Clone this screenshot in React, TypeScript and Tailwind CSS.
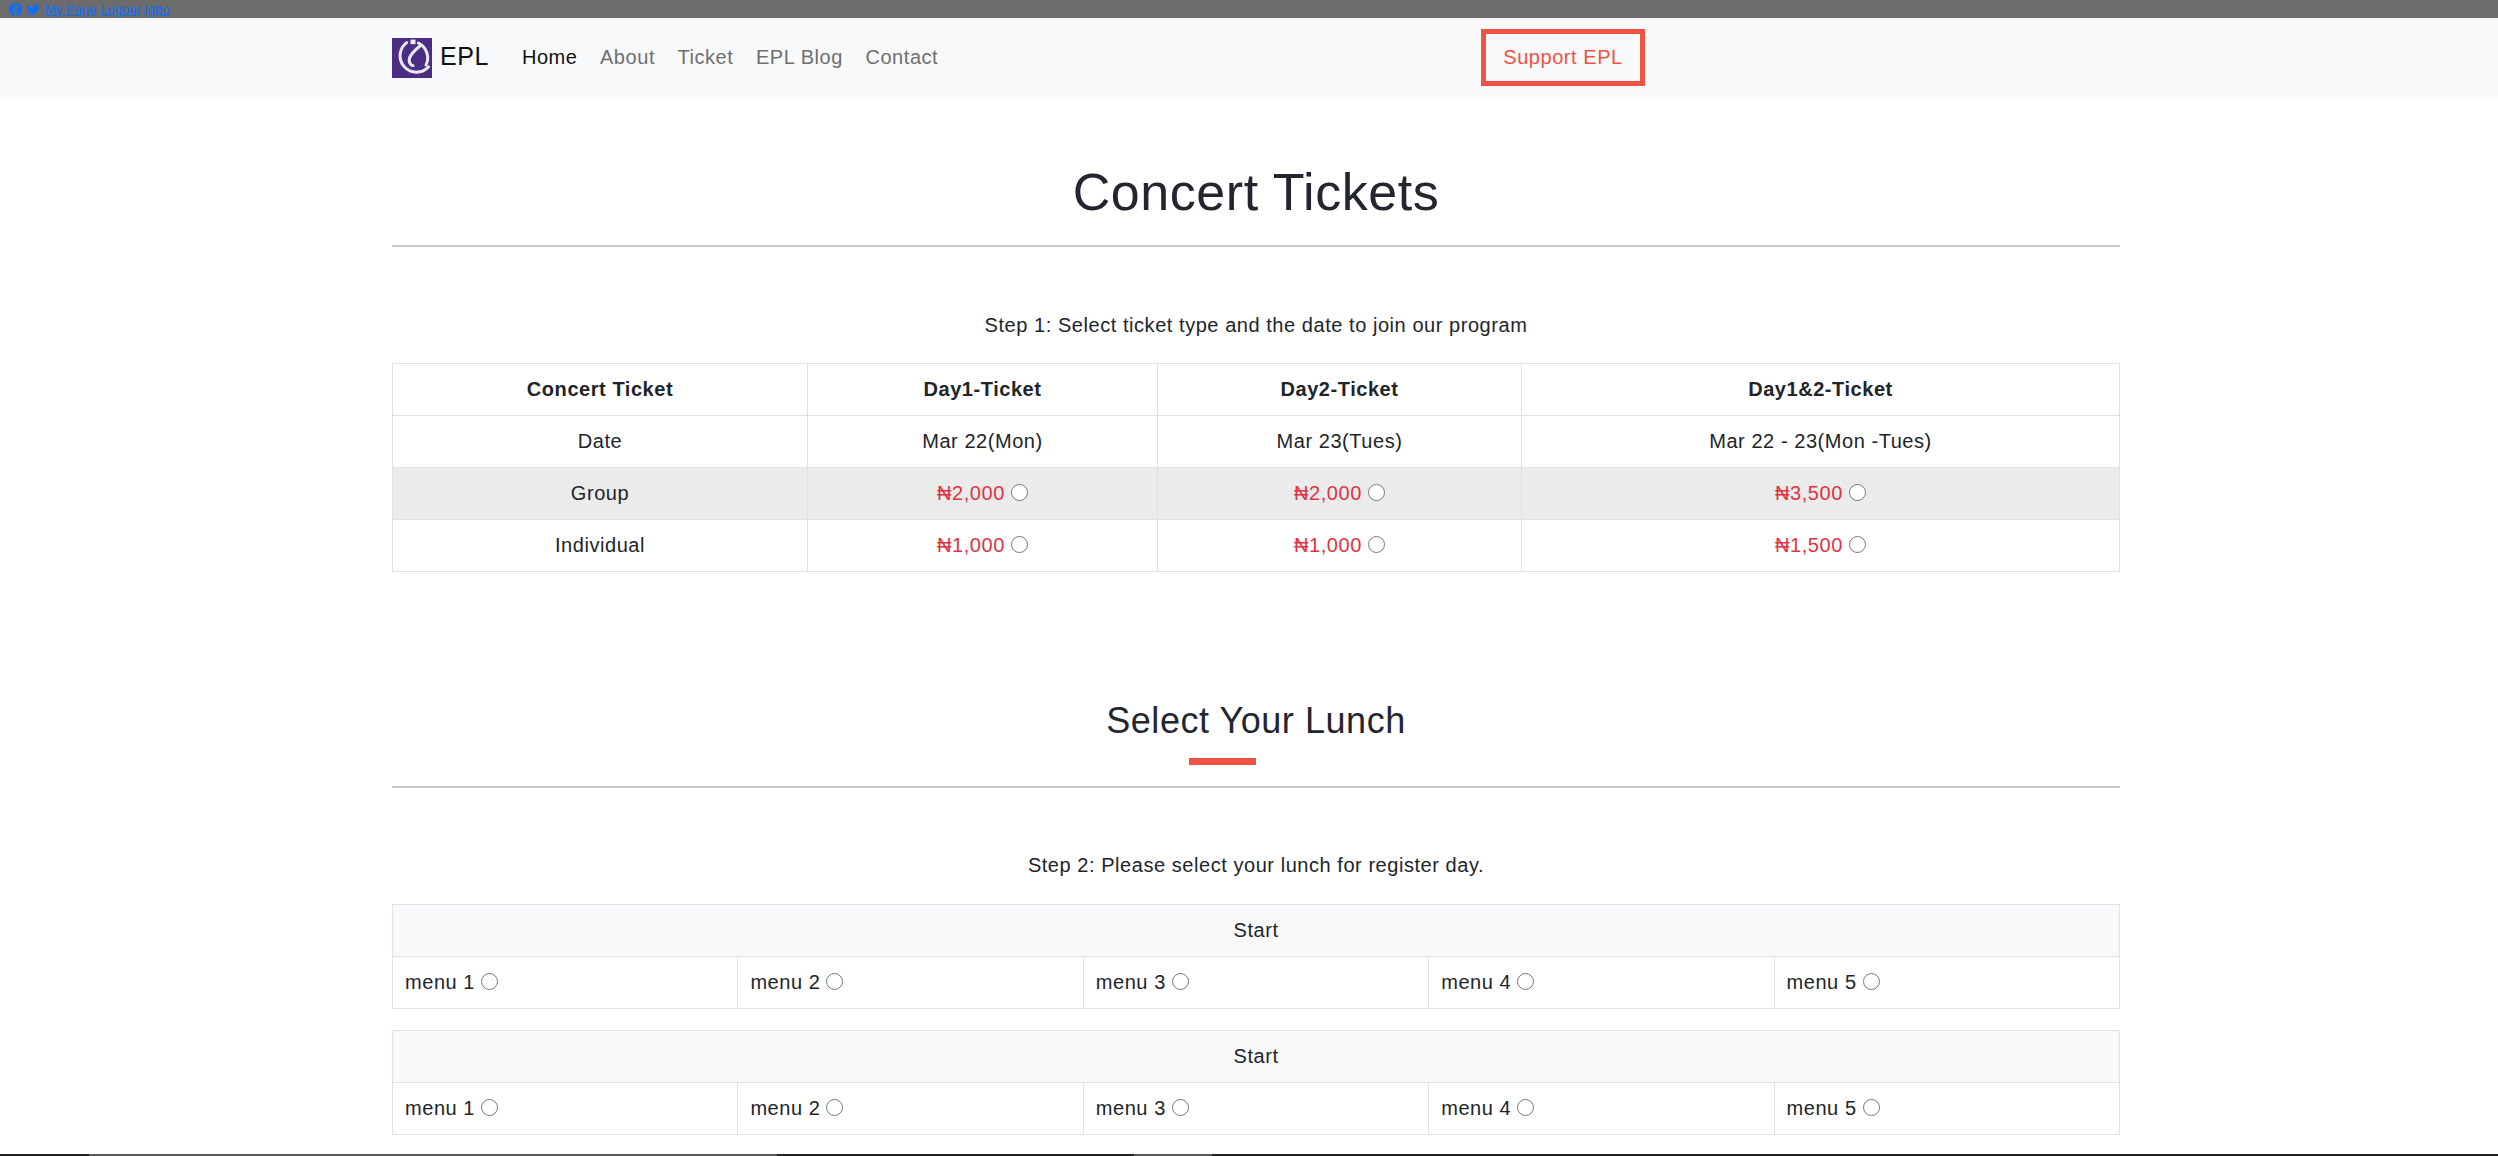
const ticketRows = [
  { label: 'Group', prices: ['₦2,000', '₦2,000', '₦3,500'], shaded: true },
  { label: 'Individual', prices: ['₦1,000', '₦1,000', '₦1,500'], shaded: false },
];

const cell = 'border border-[#dee2e6] h-[52px] p-0 pb-[2px] text-center align-middle';

function Logo() {
  return (
    <svg width="40" height="40" viewBox="0 0 40 40" className="shrink-0">
      <rect width="40" height="40" fill="#4b2e83" />
      <g fill="none" stroke="#ece8f2" strokeWidth="3" strokeLinecap="round">
        <path d="M14.7 4.6 A16.4 16.4 0 1 0 36.6 28.8" />
        <path d="M26.3 5 A16.4 16.4 0 0 1 34 27" />
        <path d="M28 8 C23 12 19 16 17.5 20 C16.5 24 18 27 21 27.6" />
      </g>
      <rect x="18.5" y="1.6" width="5" height="4.6" fill="#ece8f2" />
    </svg>
  );
}

function Radio({ name }: { name: string }) {
  return <input type="radio" name={name} className="ml-[6px] h-[17px] w-[17px] align-[-1px]" />;
}

function LunchTable({ id }: { id: string }) {
  return (
    <table className="w-full table-fixed border-collapse text-[#212529]">
      <tbody>
        <tr className="bg-[#f8f9fa]">
          <td colSpan={5} className={cell}>Start</td>
        </tr>
        <tr>
          {[1, 2, 3, 4, 5].map((n) => (
            <td key={n} className="h-[52px] border border-[#dee2e6] px-3 pb-[2px] align-middle">
              menu {n}
              <Radio name={id + n} />
            </td>
          ))}
        </tr>
      </tbody>
    </table>
  );
}

export default function App() {
  return (
    <div className="flex h-[1156px] flex-col overflow-hidden bg-white font-['Liberation_Sans',Arial,sans-serif] text-[20px] tracking-[0.55px] text-[#212529]">
      {/* Top strip */}
      <div className="flex h-[18px] items-center gap-[4px] bg-[#6c6c6c] pl-[9px] text-[13px] leading-none tracking-normal text-[#0d6efd]">
        <svg width="13" height="13" viewBox="0 0 16 16" fill="currentColor">
          <path d="M16 8.05C16 3.6 12.42 0 8 0S0 3.6 0 8.05c0 4.02 2.93 7.35 6.75 7.95v-5.62H4.72V8.05h2.03V6.28c0-2.02 1.2-3.13 3.02-3.13.88 0 1.8.16 1.8.16v1.98h-1.01c-1 0-1.31.62-1.31 1.26v1.5h2.22l-.35 2.33H9.25V16C13.07 15.4 16 12.07 16 8.05z" />
        </svg>
        <svg width="14" height="13" viewBox="0 0 16 16" fill="currentColor" className="mr-[1px]">
          <path d="M5.03 14.5c6.04 0 9.34-5 9.34-9.34 0-.14 0-.28-.01-.42A6.68 6.68 0 0 0 16 3.04a6.56 6.56 0 0 1-1.89.52 3.3 3.3 0 0 0 1.45-1.82 6.58 6.58 0 0 1-2.08.8 3.28 3.28 0 0 0-5.6 3 9.32 9.32 0 0 1-6.77-3.44 3.28 3.28 0 0 0 1.02 4.38A3.26 3.26 0 0 1 .64 6v.04a3.28 3.28 0 0 0 2.63 3.22 3.28 3.28 0 0 1-1.48.06 3.29 3.29 0 0 0 3.07 2.28A6.59 6.59 0 0 1 0 12.96a9.29 9.29 0 0 0 5.03 1.54z" />
        </svg>
        <a href="#" className="underline">My Page</a>
        <a href="#" className="underline">Logout</a>
        <a href="#" className="underline">Igbo</a>
      </div>

      {/* Navbar */}
      <nav className="flex h-[79px] items-center bg-[#f8f9fa] pl-[392px] pr-[853px]">
        <Logo />
        <span className="ml-[8px] pb-[2px] text-[25px] text-[#111]">EPL</span>
        <ul className="ml-[33px] flex gap-[22.5px] pb-[2px] text-[#6f6f6f]">
          <li className="text-[#111]">Home</li>
          <li>About</li>
          <li>Ticket</li>
          <li>EPL Blog</li>
          <li>Contact</li>
        </ul>
        <a href="#" className="ml-auto flex h-[57px] w-[164px] items-center justify-center border-[5px] border-[#ef5343] pb-[2px] text-[#ef5343]">
          Support EPL
        </a>
      </nav>

      <main className="ml-[392px] w-[1728px]">
        <h1 className="mt-[63px] text-center text-[52px] leading-[65px] text-[#23262f]">Concert Tickets</h1>
        <hr className="mt-[20px] border-t-2 border-[#c8c8c8]" />
        <p className="mt-[63px] text-center">Step 1: Select ticket type and the date to join our program</p>
        <table className="mt-[23px] w-full table-fixed border-collapse">
          <colgroup>
            <col className="w-[415px]" />
            <col className="w-[350px]" />
            <col className="w-[364px]" />
            <col />
          </colgroup>
          <tbody>
            <tr className="font-bold">
              <td className={cell}>Concert Ticket</td>
              <td className={cell}>Day1-Ticket</td>
              <td className={cell}>Day2-Ticket</td>
              <td className={cell}>Day1&amp;2-Ticket</td>
            </tr>
            <tr>
              <td className={cell}>Date</td>
              <td className={cell}>Mar 22(Mon)</td>
              <td className={cell}>Mar 23(Tues)</td>
              <td className={cell}>Mar 22 - 23(Mon -Tues)</td>
            </tr>
            {ticketRows.map((row) => (
              <tr key={row.label} className={row.shaded ? 'bg-[#ebebeb]' : ''}>
                <td className={cell}>{row.label}</td>
                {row.prices.map((price, i) => (
                  <td key={i} className={cell}>
                    <span className="text-[#dc3545]">{price}</span>
                    <Radio name={row.label + i} />
                  </td>
                ))}
              </tr>
            ))}
          </tbody>
        </table>

        <h2 className="mt-[127px] text-center text-[36px] leading-[1.2] text-[#23262f]">Select Your Lunch</h2>
        <div className="ml-[797px] mt-[16px] h-[7px] w-[67px] bg-[#ef5343]" />
        <hr className="mt-[21px] border-t-2 border-[#c8c8c8]" />
        <p className="mt-[62px] text-center">Step 2: Please select your lunch for register day.</p>
        <div className="mt-[24px] flex flex-col gap-[21px]">
          <LunchTable id="a" />
          <LunchTable id="b" />
        </div>
      </main>

      {/* Bottom edge */}
      <div className="mt-auto flex h-[2px] bg-[#232323]">
        <div className="ml-[89px] w-[688px] bg-[#595959]" />
        <div className="ml-[357px] w-[78px] bg-[#595959]" />
      </div>
    </div>
  );
}
